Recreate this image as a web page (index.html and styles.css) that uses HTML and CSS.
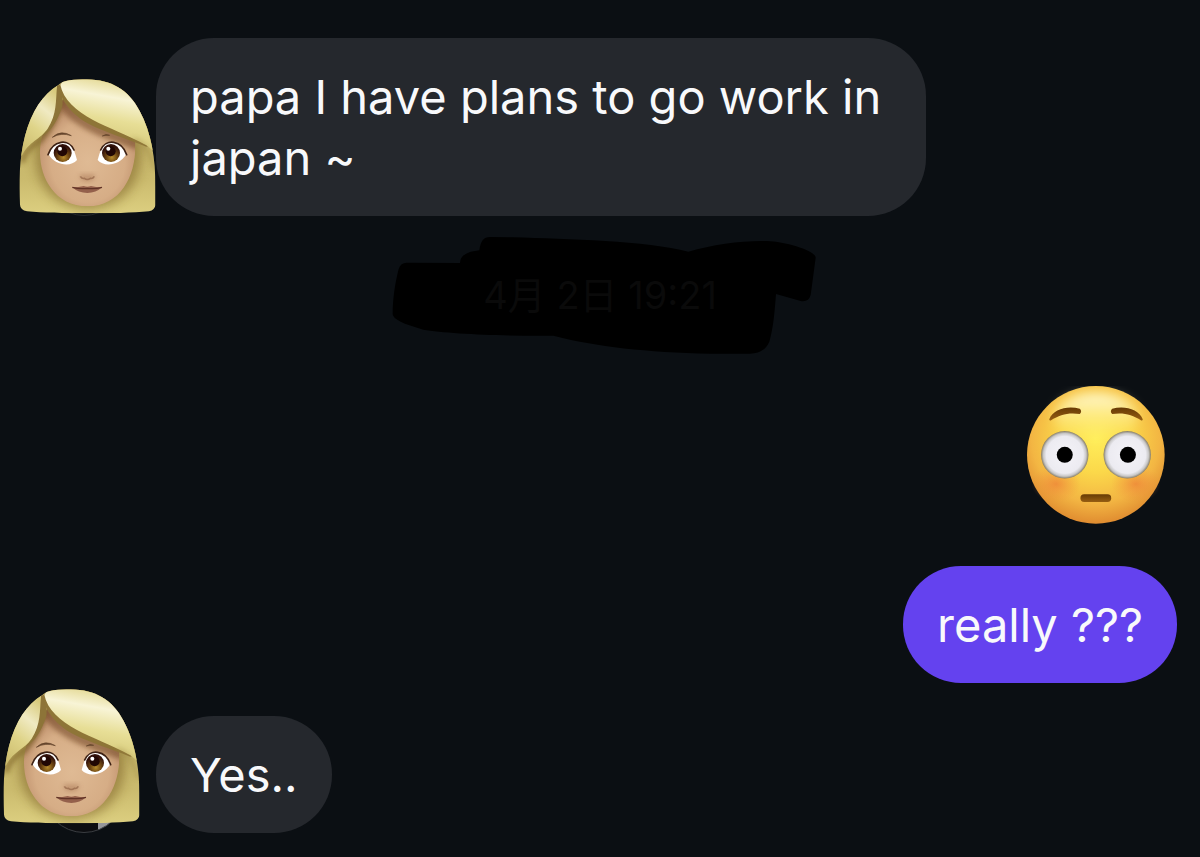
FILE: index.html
```
<!DOCTYPE html>
<html lang="en">
<head>
  <meta charset="UTF-8">
  <meta name="viewport" content="width=device-width, initial-scale=1.0">
  <title>Chat</title>
  <link rel="stylesheet" href="styles.css">
</head>
<body>
  <!-- Shared drawings -->
  <svg class="defs" width="0" height="0" aria-hidden="true">
    <defs>
      <linearGradient id="hair-back" x1="0" y1="0" x2="0" y2="1">
        <stop offset="0.4" stop-color="#c3b267"/>
        <stop offset="0.75" stop-color="#cbbb6e"/>
        <stop offset="1" stop-color="#dccf80"/>
      </linearGradient>
      <linearGradient id="hair-left" x1="0.8" y1="0" x2="0.3" y2="1">
        <stop offset="0" stop-color="#d8ca7c"/>
        <stop offset="0.3" stop-color="#f0eac2"/>
        <stop offset="0.6" stop-color="#dfd489"/>
        <stop offset="1" stop-color="#cbbb6c"/>
      </linearGradient>
      <linearGradient id="hair-right" x1="0.6" y1="0" x2="0.4" y2="0.9">
        <stop offset="0" stop-color="#ddd07f"/>
        <stop offset="0.3" stop-color="#f8f4d6"/>
        <stop offset="0.6" stop-color="#e7de96"/>
        <stop offset="1" stop-color="#d2c473"/>
      </linearGradient>
      <radialGradient id="skin" cx="0.5" cy="0.58" r="0.55">
        <stop offset="0" stop-color="#dfba94"/>
        <stop offset="0.65" stop-color="#d6ad86"/>
        <stop offset="1" stop-color="#b98a67"/>
      </radialGradient>
      <radialGradient id="iris" cx="0.55" cy="0.75" r="0.6">
        <stop offset="0" stop-color="#b58a2c"/>
        <stop offset="0.5" stop-color="#6f4712"/>
        <stop offset="1" stop-color="#32110a"/>
      </radialGradient>
      <radialGradient id="face-yellow" cx="0.5" cy="0.38" r="0.62">
        <stop offset="0" stop-color="#ffee5a"/>
        <stop offset="0.4" stop-color="#fbd84a"/>
        <stop offset="0.75" stop-color="#f3b643"/>
        <stop offset="1" stop-color="#e08c30"/>
      </radialGradient>
      <linearGradient id="face-shine" x1="0" y1="0" x2="0" y2="1">
        <stop offset="0" stop-color="#fffbe0" stop-opacity="0.95"/>
        <stop offset="1" stop-color="#fff07a" stop-opacity="0"/>
      </linearGradient>
      <radialGradient id="blush">
        <stop offset="0" stop-color="#ec7434" stop-opacity="0.6"/>
        <stop offset="1" stop-color="#f08a3a" stop-opacity="0"/>
      </radialGradient>
      <radialGradient id="eyeball">
        <stop offset="0" stop-color="#f4f3f8"/>
        <stop offset="0.78" stop-color="#ecebf1"/>
        <stop offset="0.9" stop-color="#c9c8c8"/>
        <stop offset="1" stop-color="#857c66"/>
      </radialGradient>
      <linearGradient id="brown" x1="0" y1="0" x2="0" y2="1">
        <stop offset="0" stop-color="#663a05"/>
        <stop offset="1" stop-color="#965d12"/>
      </linearGradient>
      <filter id="soft" x="-30%" y="-30%" width="160%" height="160%">
        <feGaussianBlur stdDeviation="8"/>
      </filter>
      <filter id="softer" x="-40%" y="-40%" width="180%" height="180%">
        <feGaussianBlur stdDeviation="16"/>
      </filter>
      <clipPath id="hair-clip">
        <path d="M175 78C190 62 225 60 262 60C335 62 386 90 420 155C455 220 468 300 467 380L467 438Q466 452 448 456C400 461 330 462 264 462C190 462 130 461 82 456Q62 452 61 436C58 370 58 300 76 230C96 155 130 105 175 78Z"/>
      </clipPath>
      <clipPath id="face-clip">
        <path d="M190 120C160 175 121 210 121 280C121 355 165 440 264 441C363 440 407 350 407 262L407 200L300 120Z"/>
      </clipPath>
    </defs>

    <symbol id="woman" viewBox="58 59 411 405">
      <g clip-path="url(#hair-clip)">
        <rect x="58" y="59" width="411" height="405" fill="url(#hair-back)"/>
        <path d="M110 230C92 340 130 440 264 452C398 440 438 340 420 230Z" fill="#7c6128" opacity="0.55" filter="url(#softer)"/>
        <g clip-path="url(#face-clip)">
          <rect x="110" y="110" width="310" height="340" fill="url(#skin)"/>
          <path d="M188 110C194 165 280 215 420 255" fill="none" stroke="#6e4220" stroke-width="34" opacity="0.55" filter="url(#soft)"/>
          <path d="M184 120C166 180 140 215 110 245" fill="none" stroke="#7d532e" stroke-width="26" opacity="0.5" filter="url(#soft)"/>
        </g>
        <path d="M180 85C182 140 160 200 118 245C92 262 78 275 66 310" fill="none" stroke="#7f6529" stroke-width="16" opacity="0.7" filter="url(#soft)"/>
        <path d="M173 78L183 78C182 100 192 118 188 140C174 185 154 215 128 232Z" fill="#8d7438"/>
        <path d="M172 80C168 125 172 165 144 208C120 242 88 245 66 290L40 250L110 80Z" fill="url(#hair-left)"/>
        <path d="M178 79C182 126 218 166 268 194C320 221 375 236 440 262L480 250L430 60L200 50Z" fill="#8e7537"/>
        <path d="M182 76C190 120 230 154 280 182C325 206 378 224 440 258L480 290L430 50L200 50Z" fill="url(#hair-right)"/>
        <path d="M400 240Q448 254 464 330" fill="none" stroke="#9b8642" stroke-width="8" opacity="0.6" filter="url(#soft)"/>
      </g>
      <path d="M158 234Q184 210 215 229Q184 219 158 234ZM308 230Q318 222 330 228Q318 227 308 230Z" fill="#65452c" stroke="#65452c" stroke-width="2"/>
      <path d="M146 284C160 244 206 238 221 268Q227 282 232 302C214 324 167 320 146 284Z" fill="#fff"/>
      <path d="M380 284C366 244 320 238 305 268Q299 282 294 302C312 324 359 320 380 284Z" fill="#fff"/>
      <circle cx="189" cy="281" r="27" fill="url(#iris)"/>
      <circle cx="334" cy="281" r="27" fill="url(#iris)"/>
      <circle cx="188" cy="276" r="15" fill="#210704"/>
      <circle cx="333" cy="276" r="15" fill="#210704"/>
      <circle cx="181" cy="268" r="6" fill="#fff"/>
      <circle cx="326" cy="268" r="6" fill="#fff"/>
      <path d="M145 286C160 242 208 236 223 272M381 286C366 242 318 236 303 272" fill="none" stroke="#3d2114" stroke-width="5" stroke-linecap="round"/>
      <path d="M239 350Q242 340 263 348Q284 340 287 350Q284 364 263 366Q241 364 239 350Z" fill="#a06d4c" opacity="0.5" filter="url(#soft)"/>
      <path d="M242 351Q247 359 254 357Q263 364 272 357Q279 359 284 351" fill="none" stroke="#8b5b40" stroke-width="5" opacity="0.6"/>
      <path d="M218 384Q238 384 252 380Q263 384 274 380Q288 384 307 384Q289 401 263 401Q236 401 218 384Z" fill="#94604b"/>
      <path d="M218 384Q240 390 263 387Q286 390 307 384" fill="none" stroke="#613326" stroke-width="4"/>
    </symbol>
  </svg>

  <main class="chat">
    <div class="message incoming">
      <div class="avatar">
        <svg class="sticker sticker-right" role="img" aria-label="Woman"><use href="#woman"/></svg>
      </div>
      <p class="bubble">papa I have plans to go work in japan ~</p>
    </div>

    <div class="date">
      <svg class="scribble" viewBox="12 33 1296 354" aria-hidden="true">
        <path d="M80 113L240 114Q240 90 272 80L298 76Q302 36 330 36L400 37C560 42 800 48 925 80C1000 58 1090 46 1160 48C1220 50 1308 78 1307 98L1292 210Q1286 232 1262 228L1188 207C1184 260 1180 310 1168 350Q1152 386 1110 386L990 386C800 382 650 365 520 332C380 334 200 326 130 314Q40 290 38 268C38 220 46 170 56 132Q62 113 80 113Z"/>
      </svg>
      <time class="date-text" lang="ja">4月 2日 19:21</time>
    </div>

    <div class="message outgoing">
      <svg class="emoji" viewBox="51 45 413 413" role="img" aria-label="Flushed face">
        <circle cx="257" cy="251" r="206" fill="url(#face-yellow)"/>
        <ellipse cx="257" cy="138" rx="125" ry="72" fill="url(#face-shine)" filter="url(#softer)"/>
        <ellipse cx="138" cy="338" rx="74" ry="56" fill="url(#blush)"/>
        <ellipse cx="377" cy="338" rx="74" ry="56" fill="url(#blush)"/>
        <circle cx="164" cy="251" r="71" fill="url(#eyeball)"/>
        <circle cx="351" cy="251" r="71" fill="url(#eyeball)"/>
        <circle cx="164" cy="251" r="24" fill="#000"/>
        <circle cx="353" cy="251" r="24" fill="#000"/>
        <path d="M118 144C128 114 174 102 209 113Q217 121 209 129C174 124 150 131 122 148Q116 149 118 144Z" fill="url(#brown)"/>
        <path d="M397 144C387 114 341 102 306 113Q298 121 306 129C341 124 365 131 393 148Q399 149 397 144Z" fill="url(#brown)"/>
        <rect x="211" y="369" width="92" height="23" rx="11" fill="url(#brown)"/>
      </svg>
    </div>

    <div class="message outgoing">
      <p class="bubble">really ???</p>
    </div>

    <div class="message incoming">
      <div class="avatar avatar-photo">
        <svg class="sticker sticker-left" role="img" aria-label="Woman"><use href="#woman"/></svg>
      </div>
      <p class="bubble">Yes..</p>
    </div>
  </main>
</body>
</html>
```

FILE: styles.css
```
* {
  box-sizing: border-box;
}

body {
  margin: 0;
  background-color: #0b0f13;
  color: #f8f9fb;
  font-family: Inter, "Noto Sans CJK JP", sans-serif;
  font-size: 47px;
  line-height: 61px;
}

.defs {
  position: absolute;
}

.chat {
  display: flex;
  flex-direction: column;
  padding: 38px 23px 23px 43px;
}

.message {
  display: flex;
  align-items: flex-end;
}

.incoming {
  gap: 31px;
}

.outgoing {
  justify-content: flex-end;
  margin-top: 32px;
}

.bubble {
  margin: 0;
  max-width: 770px;
  padding: 28px 34px;
  border-radius: 58px;
  background-color: #25282d;
}

.outgoing .bubble {
  margin-top: 10px;
  background-color: #6442ef;
}

.outgoing + .incoming {
  margin-top: 33px;
}

.avatar {
  position: relative;
  flex: none;
  width: 82px;
  height: 82px;
  border: 1px solid #24282c;
  border-radius: 50%;
}

.avatar-photo {
  border-color: #3a3d41;
  background: linear-gradient(90deg, #0d0e11 67%, #96979b 67%);
}

/* stickers cover the profile picture */
.sticker {
  position: absolute;
  width: 137px;
  height: 135px;
}

.sticker-right {
  right: -32px;
  bottom: 1px;
}

.sticker-left {
  left: -41px;
  bottom: 8px;
}

.date {
  position: relative;
  align-self: center;
  margin: 20px 20px 0 0;
}

.scribble {
  display: block;
  width: 432px;
  height: 118px;
  fill: #000;
}

.date-text {
  position: absolute;
  inset: 0;
  color: #0a0a0a;
  font-size: 38px;
  line-height: 118px;
  text-align: center;
}

.emoji {
  display: block;
  width: 138px;
  height: 138px;
  margin-right: 12px;
}
```
